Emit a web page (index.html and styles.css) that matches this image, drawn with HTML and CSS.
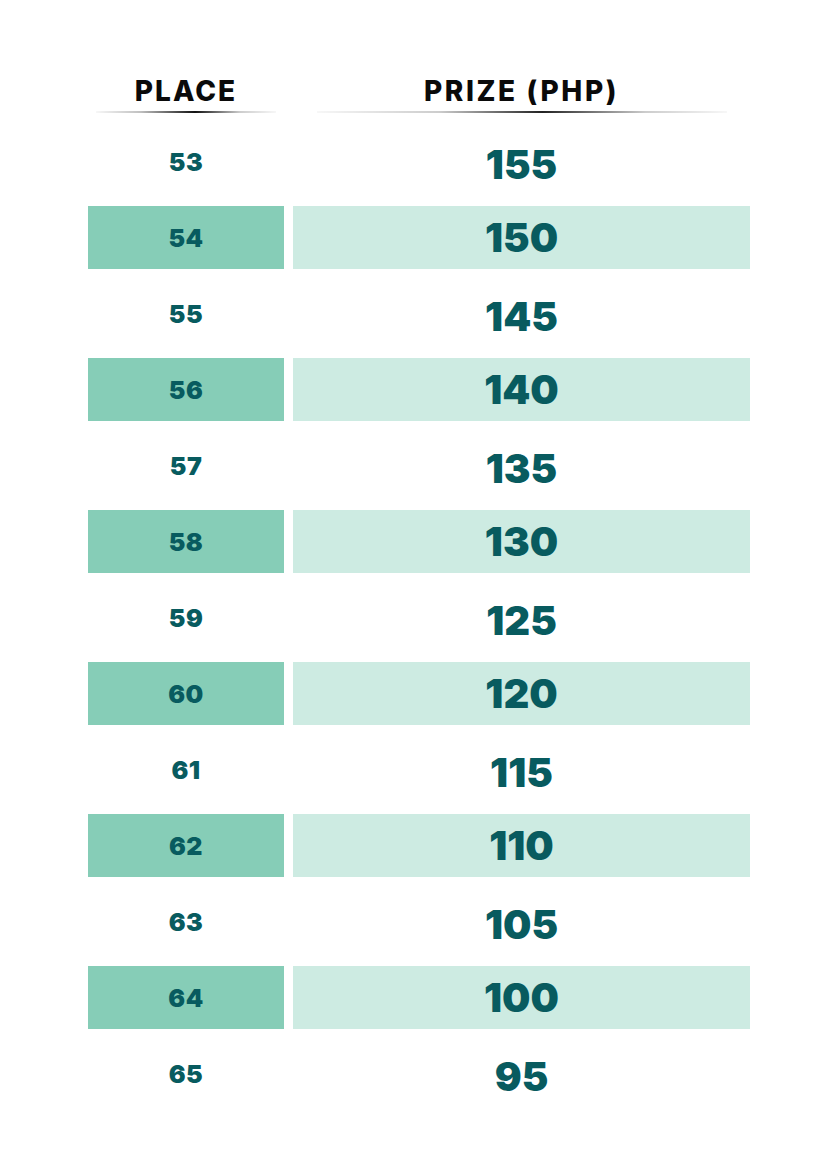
FILE: index.html
```html
<!DOCTYPE html>
<html>
<head>
<meta charset="utf-8">
<link rel="stylesheet" href="styles.css">
</head>
<body>
<div class="table">
  <div class="head">
    <div class="hcell place"><span>PLACE</span><i class="line"></i></div>
    <div class="hcell prize"><span>PRIZE (PHP)</span><i class="line"></i></div>
  </div>
  <div class="row"><div class="c1">53</div><div class="c2">155</div></div>
  <div class="row alt"><div class="c1">54</div><div class="c2">150</div></div>
  <div class="row"><div class="c1">55</div><div class="c2">145</div></div>
  <div class="row alt"><div class="c1">56</div><div class="c2">140</div></div>
  <div class="row"><div class="c1">57</div><div class="c2">135</div></div>
  <div class="row alt"><div class="c1">58</div><div class="c2">130</div></div>
  <div class="row"><div class="c1">59</div><div class="c2">125</div></div>
  <div class="row alt"><div class="c1">60</div><div class="c2">120</div></div>
  <div class="row"><div class="c1">61</div><div class="c2">115</div></div>
  <div class="row alt"><div class="c1">62</div><div class="c2">110</div></div>
  <div class="row"><div class="c1">63</div><div class="c2">105</div></div>
  <div class="row alt"><div class="c1">64</div><div class="c2">100</div></div>
  <div class="row"><div class="c1">65</div><div class="c2">95</div></div>
</div>
</body>
</html>
```
FILE: styles.css
```css
html, body {
  margin: 0;
  padding: 0;
  background: #ffffff;
}
body {
  font-family: Inter, "Noto Sans", sans-serif;
  width: 838px;
  height: 1166px;
}
.table {
  padding: 76px 0 0 88px;
  width: 662px;
}
.head {
  display: grid;
  grid-template-columns: 196px 457px;
  column-gap: 9px;
  height: 41px;
}
.hcell {
  display: flex;
  flex-direction: column;
  align-items: center;
}
.hcell span {
  font-size: 28px;
  font-weight: 800;
  letter-spacing: 2px;
  color: #0a0a0a;
  line-height: 30px;
}
.prize span {
  letter-spacing: 2.6px;
}
.line {
  display: block;
  height: 2px;
  margin-top: 5px;
}
.place .line {
  width: 180px;
  background: linear-gradient(to right, rgba(0,0,0,0.03), rgba(0,0,0,0.25) 25%, #111 55%, rgba(0,0,0,0.2) 80%, rgba(0,0,0,0.03));
}
.prize .line {
  width: 410px;
  background: linear-gradient(to right, rgba(0,0,0,0.03), rgba(0,0,0,0.2) 30%, #222 55%, rgba(0,0,0,0.2) 80%, rgba(0,0,0,0.03));
}
.row {
  display: grid;
  grid-template-columns: 196px 457px;
  column-gap: 9px;
  height: 89px;
  color: #085b5f;
  font-weight: 900;
}
.row.alt {
  height: 63px;
}
.c1, .c2 {
  display: flex;
  align-items: center;
  justify-content: center;
}
.c1 {
  font-size: 25px;
  letter-spacing: 0.5px;
}
.c2 {
  font-size: 40px;
  padding-top: 6px;
}
.alt .c2 {
  padding-top: 0;
}
.alt .c1 {
  background: #86cdb7;
}
.alt .c2 {
  background: #cdebe2;
}
```
